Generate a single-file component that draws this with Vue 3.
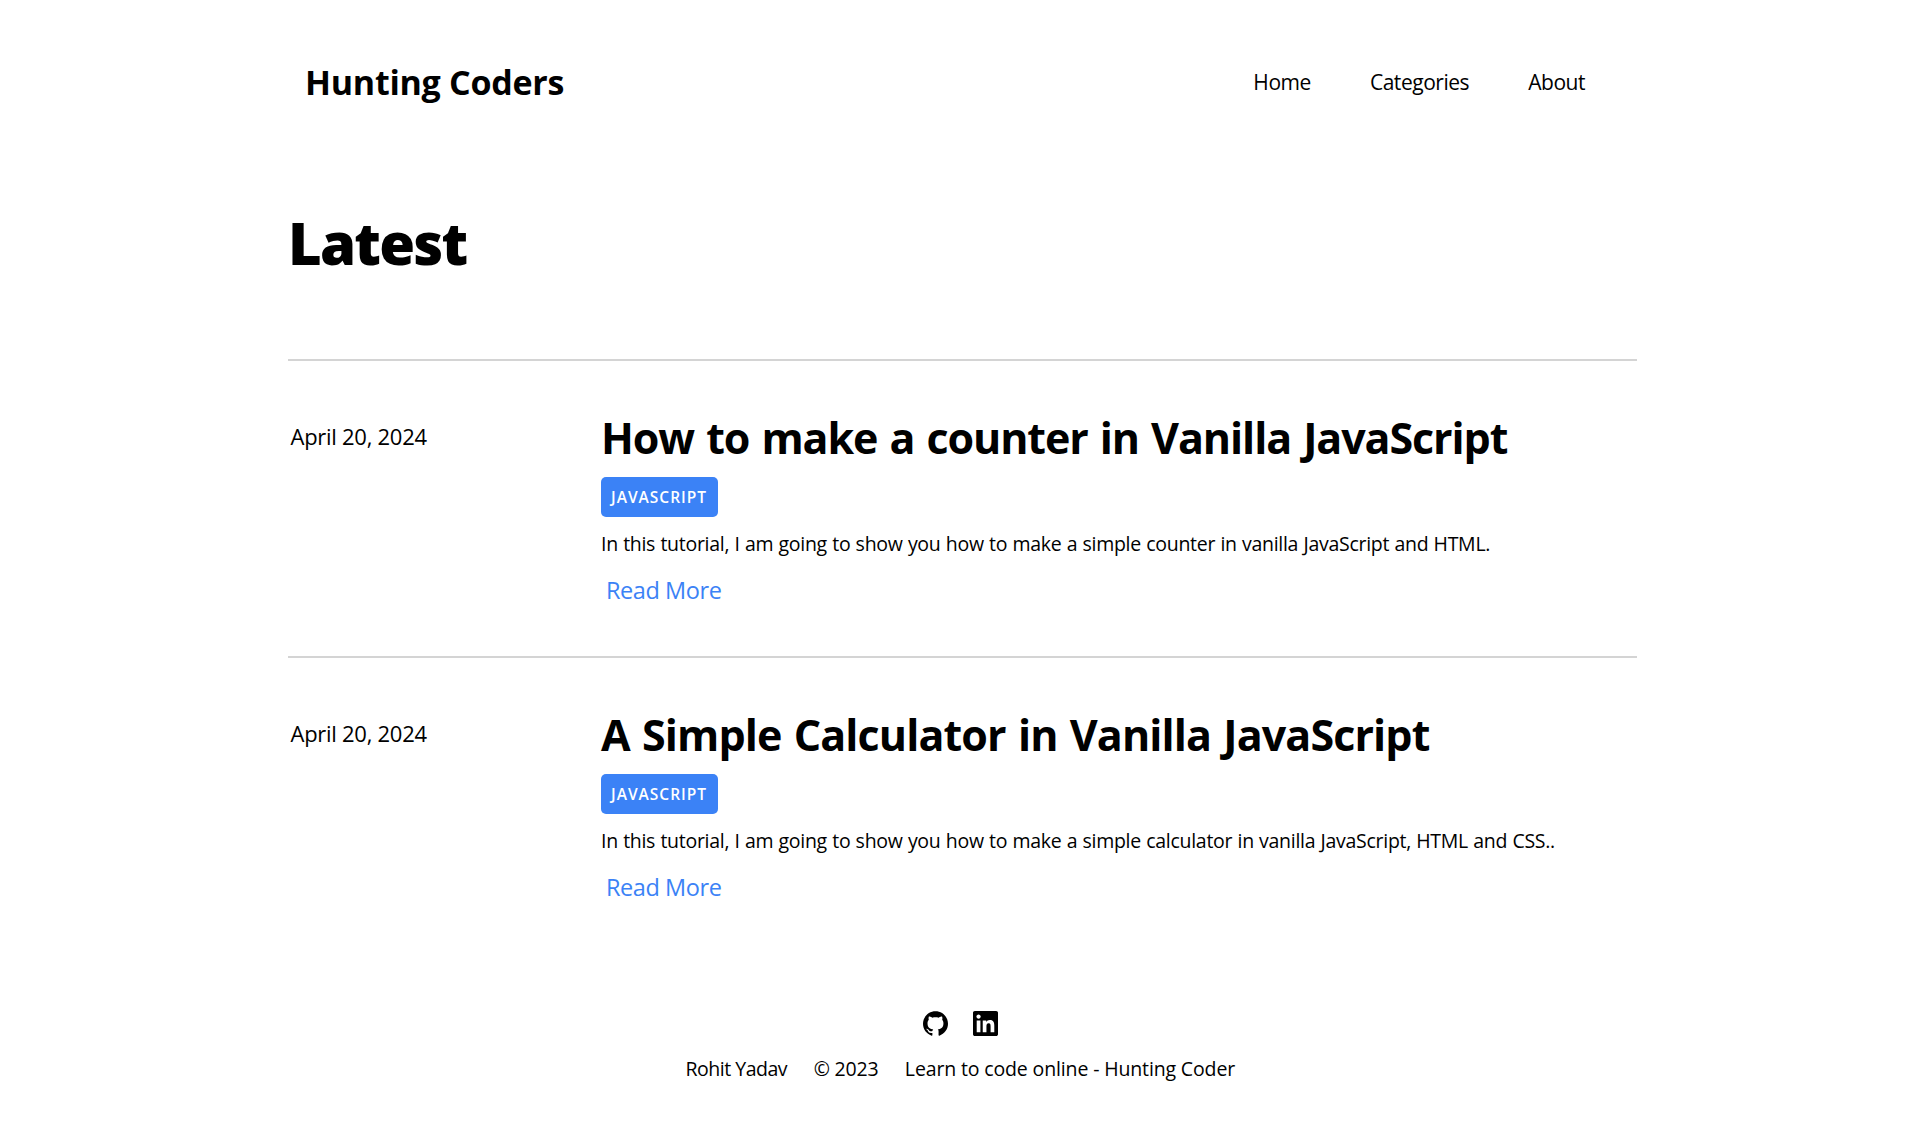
<script setup>
const links = ['Home', 'Categories', 'About']
const posts = [
  {
    date: 'April 20, 2024',
    title: 'How to make a counter in Vanilla JavaScript',
    tag: 'JavaScript',
    summary: 'In this tutorial, I am going to show you how to make a simple counter in vanilla JavaScript and HTML.'
  },
  {
    date: 'April 20, 2024',
    title: 'A Simple Calculator in Vanilla JavaScript',
    tag: 'JavaScript',
    summary: 'In this tutorial, I am going to show you how to make a simple calculator in vanilla JavaScript, HTML and CSS..'
  }
]
</script>

<template>
  <div class="page">
    <header class="header">
      <a class="logo">Hunting Coders</a>
      <nav class="nav">
        <a v-for="link in links" :key="link">{{ link }}</a>
      </nav>
    </header>

    <main>
      <h1 class="heading">Latest</h1>
      <article v-for="post in posts" :key="post.title" class="post">
        <time class="date">{{ post.date }}</time>
        <div class="body">
          <h2 class="title">{{ post.title }}</h2>
          <span class="tag">{{ post.tag }}</span>
          <p class="summary">{{ post.summary }}</p>
          <a class="more">Read More</a>
        </div>
      </article>
    </main>

    <footer class="footer">
      <div class="social">
        <svg viewBox="0 0 24 24" aria-label="GitHub">
          <path d="M12 .297c-6.63 0-12 5.373-12 12 0 5.303 3.438 9.8 8.205 11.385.6.113.82-.258.82-.577 0-.285-.01-1.04-.015-2.04-3.338.724-4.042-1.61-4.042-1.61C4.422 18.07 3.633 17.7 3.633 17.7c-1.087-.744.084-.729.084-.729 1.205.084 1.838 1.236 1.838 1.236 1.07 1.835 2.809 1.305 3.495.998.108-.776.417-1.305.76-1.605-2.665-.3-5.466-1.332-5.466-5.93 0-1.31.465-2.38 1.235-3.22-.135-.303-.54-1.523.105-3.176 0 0 1.005-.322 3.3 1.23.96-.267 1.98-.399 3-.405 1.02.006 2.04.138 3 .405 2.28-1.552 3.285-1.23 3.285-1.23.645 1.653.24 2.873.12 3.176.765.84 1.23 1.91 1.23 3.22 0 4.61-2.805 5.625-5.475 5.92.42.36.81 1.096.81 2.22 0 1.606-.015 2.896-.015 3.286 0 .315.21.69.825.57C20.565 22.092 24 17.592 24 12.297c0-6.627-5.373-12-12-12" />
        </svg>
        <svg viewBox="0 0 24 24" aria-label="LinkedIn">
          <path d="M20.447 20.452h-3.554v-5.569c0-1.328-.027-3.037-1.852-3.037-1.853 0-2.136 1.445-2.136 2.939v5.667H9.351V9h3.414v1.561h.046c.477-.9 1.637-1.85 3.37-1.85 3.601 0 4.267 2.37 4.267 5.455v6.286zM5.337 7.433c-1.144 0-2.063-.926-2.063-2.065 0-1.138.92-2.063 2.063-2.063 1.14 0 2.064.925 2.064 2.063 0 1.139-.925 2.065-2.064 2.065zm1.782 13.019H3.555V9h3.564v11.452zM22.225 0H1.771C.792 0 0 .774 0 1.729v20.542C0 23.227.792 24 1.771 24h20.451C23.2 24 24 23.227 24 22.271V1.729C24 .774 23.2 0 22.222 0h.003z" />
        </svg>
      </div>
      <div class="credits">
        <span class="author">Rohit Yadav</span>
        <span class="year">© 2023</span>
        <span class="tagline">Learn to code online - Hunting Coder</span>
      </div>
    </footer>
  </div>
</template>

<style>
body {
  margin: 0;
  background: #fff;
}
</style>

<style scoped>
.page {
  width: 1349px;
  min-height: 1140px;
  margin: 0 auto 0 288px;
  color: #000;
  font-family: "Open Sans", "Noto Sans", sans-serif;
}
.header {
  display: flex;
  align-items: center;
  justify-content: space-between;
  padding: 62px 52px 0 17px;
}
.logo {
  font-size: 34px;
  line-height: 40px;
  font-weight: 700;
  letter-spacing: -0.27px;
}
.nav {
  display: flex;
  gap: 59px;
  font-size: 21px;
  line-height: 28px;
  letter-spacing: -0.46px;
}
.heading {
  margin: 111px 0 86px;
  font-size: 58px;
  line-height: 60px;
  font-weight: 800;
  letter-spacing: -1.78px;
}
.post {
  display: flex;
  box-sizing: border-box;
  height: 297px;
  border-top: 2px solid #d4d4d4;
  padding-top: 53px;
}
.date {
  width: 310.5px;
  padding: 7px 0 0 2.5px;
  font-size: 22px;
  line-height: 30px;
  letter-spacing: -0.27px;
}
.title {
  margin: 0 0 15px;
  font-size: 43px;
  line-height: 48px;
  font-weight: 700;
  letter-spacing: -1.08px;
  word-spacing: 2px;
}
.tag {
  display: block;
  box-sizing: border-box;
  width: 117px;
  height: 40px;
  padding-left: 10px;
  border-radius: 5px;
  background: #3b82f6;
  color: #fff;
  font-size: 15.5px;
  line-height: 40px;
  font-weight: 600;
  letter-spacing: 1px;
  text-transform: uppercase;
}
.summary {
  margin: 13px 0 16px;
  font-size: 19.5px;
  line-height: 28px;
  letter-spacing: -0.28px;
  word-spacing: 0.5px;
}
.more {
  display: block;
  margin-left: 5px;
  color: #3b82f6;
  font-size: 23.5px;
  line-height: 32px;
  letter-spacing: -0.43px;
}
.post:last-child .title {
  letter-spacing: -0.89px;
}
.footer {
  padding-top: 58px;
}
.social {
  display: flex;
  gap: 25px;
  margin-left: 635px;
}
.social svg {
  width: 25px;
  height: 25px;
}
.credits {
  display: flex;
  gap: 26.5px;
  margin: 18px 0 0 397.5px;
  font-size: 19.5px;
  line-height: 29px;
  letter-spacing: -0.14px;
}
.author {
  letter-spacing: -0.48px;
}
.year {
  letter-spacing: -0.2px;
}
</style>
